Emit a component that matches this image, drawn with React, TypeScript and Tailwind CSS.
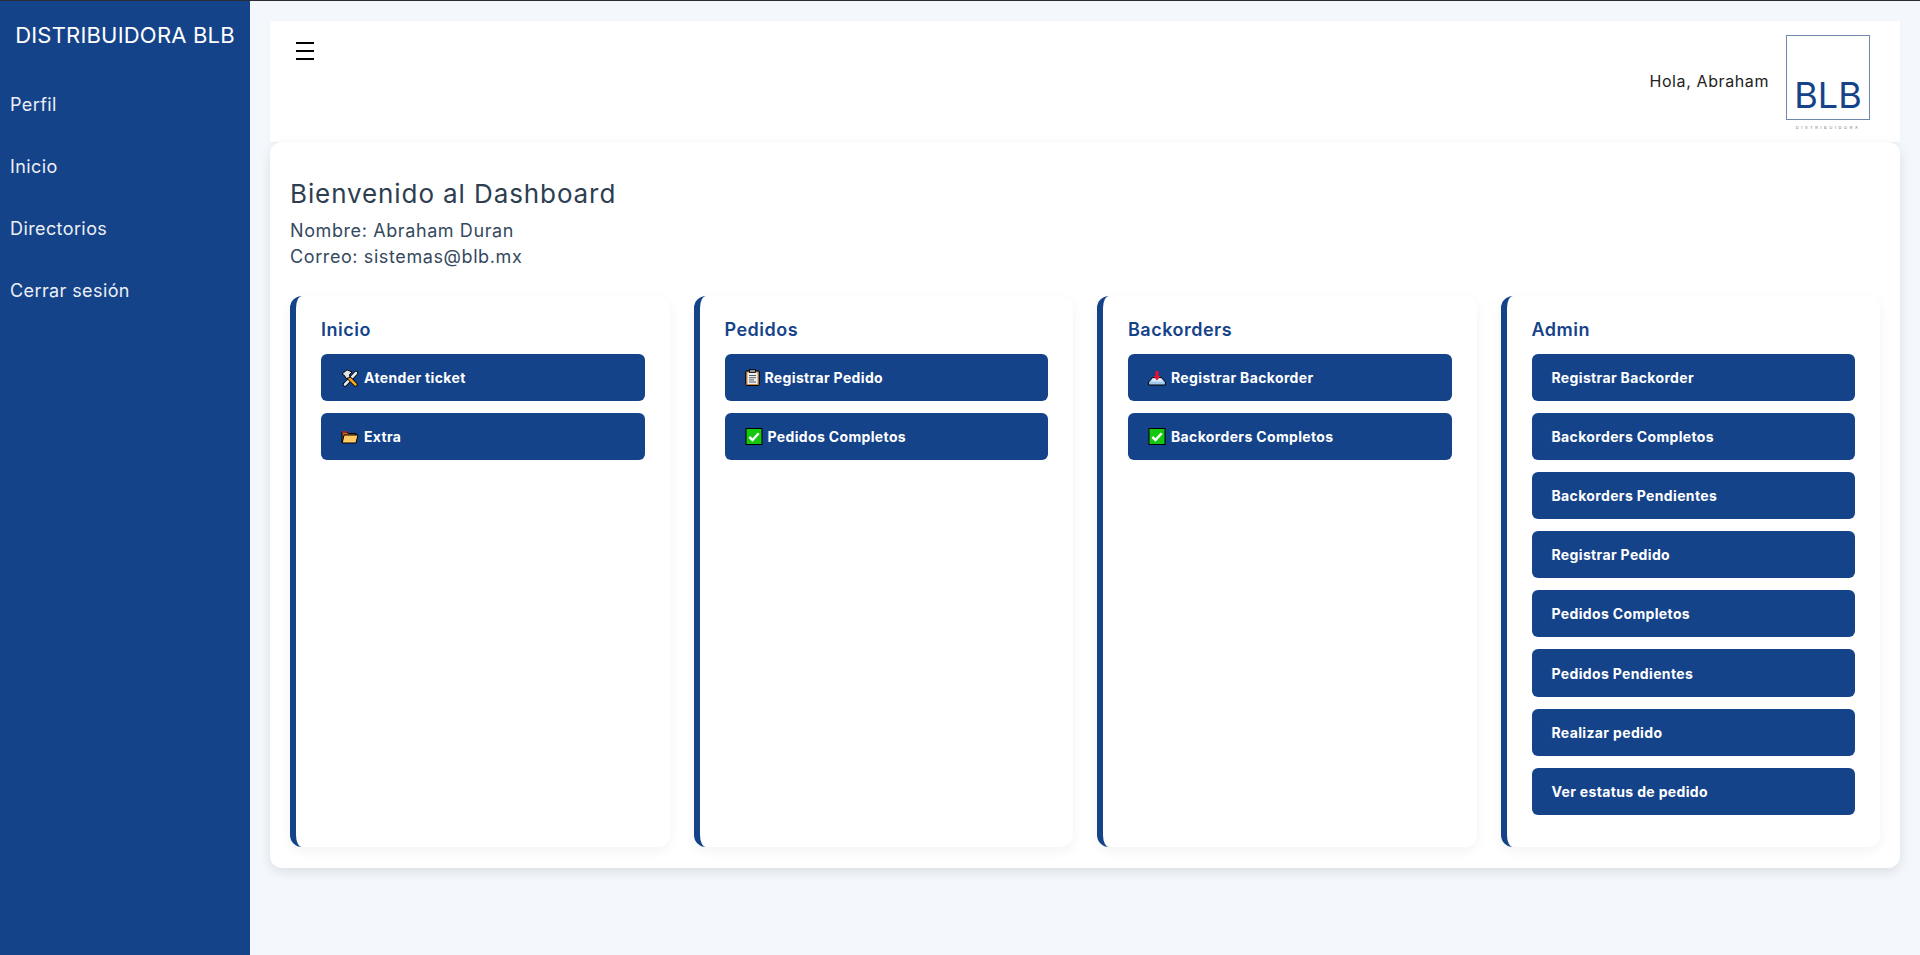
import React from 'react';

const FONT = "font-['Inter','Liberation_Sans',sans-serif]";

const ToolsIcon = () => (
  <svg width="18" height="18" viewBox="0 0 18 18" className="shrink-0">
    <path d="M4 15.5 L15 4" stroke="#000" strokeWidth="4.2" strokeLinecap="round" />
    <path d="M4 15.5 L15 4" stroke="#e6e9ee" strokeWidth="2.6" strokeLinecap="round" />
    <path d="M14.5 15.5 L6 7" stroke="#000" strokeWidth="4.2" strokeLinecap="round" />
    <path d="M14.5 15.5 L6 7" stroke="#f5a623" strokeWidth="2.6" strokeLinecap="round" />
    <path d="M1 5 L6 0.8 L11 3 L8.5 5.5 L9 8.5 L5 9.5 L3.5 6.5 Z" fill="#dfe3e8" stroke="#000" strokeWidth="1" />
  </svg>
);

const FolderIcon = () => (
  <svg width="18" height="14" viewBox="0 0 18 14" className="shrink-0">
    <path d="M1 12.5 V2 H6 L7.5 3.5 H15 V5" fill="#b8651a" stroke="#000" strokeWidth="1" />
    <path d="M1 2 H6" stroke="#d8222a" strokeWidth="1.4" />
    <path d="M1.2 13 L3 5 H17 L15 13 Z" fill="#ffc966" stroke="#000" strokeWidth="1" />
  </svg>
);

const ClipboardIcon = () => (
  <svg width="15" height="17" viewBox="0 0 15 17" className="shrink-0">
    <rect x="0.7" y="2" width="13.6" height="14.5" rx="1" fill="#c98a4e" stroke="#000" strokeWidth="1" />
    <rect x="2.5" y="3.5" width="10" height="11.5" fill="#eef0f2" />
    <rect x="4.5" y="0.5" width="6" height="3" fill="#8d949c" stroke="#000" strokeWidth="0.8" />
    <path d="M4 6.5 H11 M4 8.7 H11 M4 10.9 H9 M4 13 H11" stroke="#555b63" strokeWidth="1" />
  </svg>
);

const InboxIcon = () => (
  <svg width="18" height="16" viewBox="0 0 18 16" className="shrink-0">
    <path d="M0.6 15 L0.6 12 L4.5 7.5 H13.5 L17.4 12 V15 Z" fill="#9ecbee" stroke="#000" strokeWidth="1" />
    <path d="M3 11.5 L5.2 8.5 H12.8 L15 11.5 Z" fill="#dfeefa" />
    <path d="M7.4 1 H10.6 V6 H12.6 L9 10.5 L5.4 6 H7.4 Z" fill="#e0142b" />
  </svg>
);

const CheckIcon = () => (
  <svg width="18" height="17" viewBox="0 0 17 17" className="shrink-0">
    <rect x="0.5" y="0.5" width="16" height="16" fill="#14c80e" stroke="#000" />
    <path d="M3.8 9 L7 12 L13.2 5.2" fill="none" stroke="#fff" strokeWidth="2.4" />
  </svg>
);

type Item = { label: string; icon?: React.ReactNode };

const SECTIONS: { title: string; items: Item[] }[] = [
  {
    title: 'Inicio',
    items: [
      { label: 'Atender ticket', icon: <ToolsIcon /> },
      { label: 'Extra', icon: <FolderIcon /> },
    ],
  },
  {
    title: 'Pedidos',
    items: [
      { label: 'Registrar Pedido', icon: <ClipboardIcon /> },
      { label: 'Pedidos Completos', icon: <CheckIcon /> },
    ],
  },
  {
    title: 'Backorders',
    items: [
      { label: 'Registrar Backorder', icon: <InboxIcon /> },
      { label: 'Backorders Completos', icon: <CheckIcon /> },
    ],
  },
  {
    title: 'Admin',
    items: [
      { label: 'Registrar Backorder' },
      { label: 'Backorders Completos' },
      { label: 'Backorders Pendientes' },
      { label: 'Registrar Pedido' },
      { label: 'Pedidos Completos' },
      { label: 'Pedidos Pendientes' },
      { label: 'Realizar pedido' },
      { label: 'Ver estatus de pedido' },
    ],
  },
];

const NAV = ['Perfil', 'Inicio', 'Directorios', 'Cerrar sesión'];

export default function App() {
  return (
    <div className={`${FONT} h-[955px] overflow-hidden flex flex-col bg-[#f4f7fc]`}>
      <div className="h-px shrink-0 bg-[#2b2d36]"></div>
      <div className="flex flex-1">
        {/* Sidebar */}
        <aside className="w-[250px] shrink-0 bg-[#15438a] text-[#ecf0f6]">
          <div className="h-[72px] pt-[18px] text-center text-[22px] leading-[33px] tracking-[0.2px] text-white">
            DISTRIBUIDORA BLB
          </div>
          {NAV.map((item) => (
            <div key={item} className="h-[62px] flex items-center pl-[10px] text-[18px] tracking-[0.4px]">
              {item}
            </div>
          ))}
        </aside>

        <main className="flex-1 p-5">
          {/* Header */}
          <header className="h-[121px] flex justify-between items-start bg-white pl-[26px] pr-[30px] shadow-[0_2px_6px_rgba(0,0,0,0.03)]">
            <svg width="18" height="18" viewBox="0 0 18 18" className="mt-[21px] shrink-0">
              <path d="M0 1 H18 M0 9 H18 M0 17 H18" stroke="#000" strokeWidth="2" />
            </svg>
            <div className="flex items-center gap-[17px] pt-[14px]">
              <span className="mb-1 text-[16px] tracking-[0.6px] text-[#222]">Hola, Abraham</span>
              <div className="w-[84px] flex flex-col items-center">
                <div className="w-[84px] h-[85px] border border-[#6f86ad] flex items-end justify-center text-[36px] leading-[36px] pb-[6px] text-[#15438a]">
                  BLB
                </div>
                <div className="mt-[5px] text-[4px] leading-[6px] tracking-[2.6px] text-[#777]">DISTRIBUIDORA</div>
              </div>
            </div>
          </header>

          {/* Dashboard */}
          <section className="bg-white rounded-xl px-5 pt-5 pb-[21px] shadow-[0_4px_12px_rgba(0,0,0,0.1)]">
            <h1 className="mt-[14px] text-[26px] leading-[36px] tracking-[0.9px] text-[#2c3e50]">Bienvenido al Dashboard</h1>
            <p className="mt-[6px] text-[18px] leading-[26px] tracking-[0.6px] text-[#34495e]">Nombre: Abraham Duran</p>
            <p className="text-[18px] leading-[26px] tracking-[0.6px] text-[#34495e]">Correo: sistemas@blb.mx</p>

            <div className="mt-[26px] grid grid-cols-4 gap-6">
              {SECTIONS.map((section) => (
                <div
                  key={section.title}
                  className="bg-white rounded-xl border-l-[6px] border-[#15438a] pt-5 pb-8 px-[25px] shadow-[0_4px_12px_rgba(0,0,0,0.05)]"
                >
                  <h2 className="text-[18px] leading-[27px] font-semibold tracking-[0.5px] text-[#15438a] mb-[11px]">{section.title}</h2>
                  <div className="flex flex-col gap-3">
                    {section.items.map((item) => (
                      <button
                        key={item.label}
                        className="h-[47.1px] flex items-center gap-[5px] rounded-md bg-[#15438a] pl-5 text-left text-[14px] font-bold tracking-[0.35px] text-white"
                      >
                        {item.icon}
                        {item.label}
                      </button>
                    ))}
                  </div>
                </div>
              ))}
            </div>
          </section>
        </main>
      </div>
    </div>
  );
}
